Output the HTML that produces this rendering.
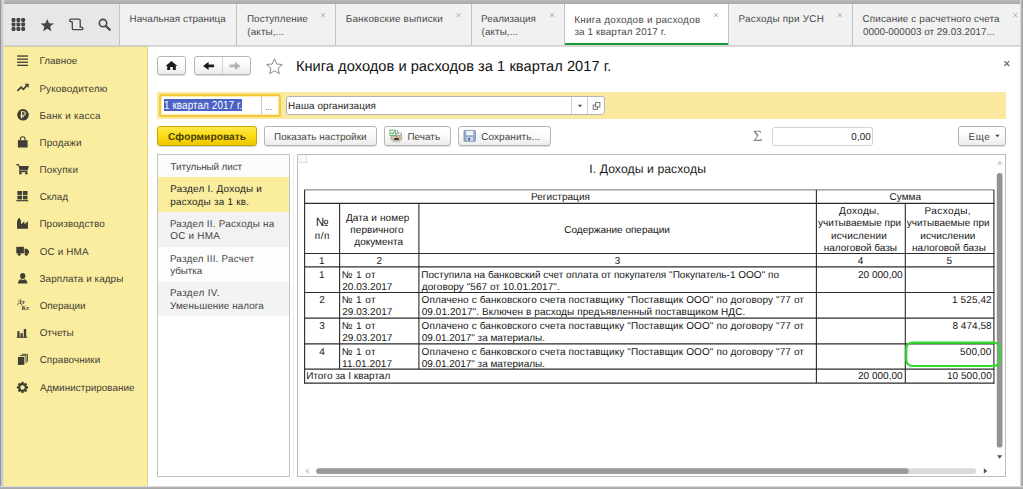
<!DOCTYPE html>
<html lang="ru"><head><meta charset="utf-8"><title>Книга доходов и расходов за 1 квартал 2017 г.</title>
<style>
*{box-sizing:border-box;margin:0;padding:0}
html,body{width:1023px;height:489px;overflow:hidden}
body{position:relative;background:#fff;font-family:"Liberation Sans",Arial,sans-serif;font-size:10px;color:#333;text-rendering:geometricPrecision}
.a{position:absolute}
.t{position:absolute;white-space:nowrap;line-height:14px;height:14px}
.btn{position:absolute;background:linear-gradient(180deg,#ffffff 0,#fbfbfb 45%,#ececec 100%);border:1px solid #b5b5b5;border-radius:3px;box-shadow:0 1px 0 rgba(0,0,0,.13)}
.ybtn{position:absolute;background:linear-gradient(180deg,#ffe94a 0,#fbdc12 50%,#efc600 100%);border:1px solid #c7a503;border-radius:3px;box-shadow:0 1px 0 rgba(0,0,0,.16)}
.x{position:absolute;width:5px;height:5px}
svg{position:absolute;overflow:visible}
</style></head><body>
<div class="a" style="left:4px;top:4px;width:1017px;height:42px;background:#f1f1f1"></div>
<div class="a" style="left:4px;top:4px;width:115px;height:41px;background:#e7e7e7"></div>
<div class="a" style="left:4px;top:45px;width:1017px;height:1px;background:#d3d3d3"></div>
<div class="a" style="left:148px;top:46px;width:873px;height:1px;background:#d9d9d9"></div>
<div class="a" style="left:119px;top:4px;width:1px;height:41px;background:#c2c2c2"></div>
<div class="a" style="left:236px;top:4px;width:1px;height:41px;background:#c2c2c2"></div>
<div class="a" style="left:335px;top:4px;width:1px;height:41px;background:#c2c2c2"></div>
<div class="a" style="left:471px;top:4px;width:1px;height:41px;background:#c2c2c2"></div>
<div class="a" style="left:852px;top:4px;width:1px;height:41px;background:#c2c2c2"></div>
<div class="a" style="left:564px;top:4px;width:165px;height:41px;background:#fff;border-left:1px solid #c2c2c2;border-right:1px solid #c2c2c2"></div>
<div class="a" style="left:565px;top:43px;width:163px;height:2px;background:#1a9a3a"></div>
<svg style="left:0;top:0" width="1023" height="489"><path d="M321.25 13.15L325.15 17.05M325.15 13.15L321.25 17.05" stroke="#a6a6a6" stroke-width="0.9" fill="none"/></svg>
<svg style="left:0;top:0" width="1023" height="489"><path d="M456.65000000000003 13.15L460.55 17.05M460.55 13.15L456.65000000000003 17.05" stroke="#a6a6a6" stroke-width="0.9" fill="none"/></svg>
<svg style="left:0;top:0" width="1023" height="489"><path d="M550.15 13.15L554.0500000000001 17.05M554.0500000000001 13.15L550.15 17.05" stroke="#a6a6a6" stroke-width="0.9" fill="none"/></svg>
<svg style="left:0;top:0" width="1023" height="489"><path d="M714.05 13.15L717.95 17.05M717.95 13.15L714.05 17.05" stroke="#a6a6a6" stroke-width="0.9" fill="none"/></svg>
<svg style="left:0;top:0" width="1023" height="489"><path d="M837.8499999999999 13.15L841.75 17.05M841.75 13.15L837.8499999999999 17.05" stroke="#a6a6a6" stroke-width="0.9" fill="none"/></svg>
<svg style="left:0;top:0" width="1023" height="489"><path d="M1013.4499999999999 13.15L1017.35 17.05M1017.35 13.15L1013.4499999999999 17.05" stroke="#a6a6a6" stroke-width="0.9" fill="none"/></svg>
<svg style="left:0;top:0" width="125" height="46" viewBox="0 0 125 46">
<g fill="#454545"><rect x="11.6" y="18.0" width="3.9" height="3.9" rx="1.1"/><rect x="11.6" y="22.5" width="3.9" height="3.9" rx="1.1"/><rect x="11.6" y="27.0" width="3.9" height="3.9" rx="1.1"/><rect x="16.4" y="18.0" width="3.9" height="3.9" rx="1.1"/><rect x="16.4" y="22.5" width="3.9" height="3.9" rx="1.1"/><rect x="16.4" y="27.0" width="3.9" height="3.9" rx="1.1"/><rect x="21.2" y="18.0" width="3.9" height="3.9" rx="1.1"/><rect x="21.2" y="22.5" width="3.9" height="3.9" rx="1.1"/><rect x="21.2" y="27.0" width="3.9" height="3.9" rx="1.1"/></g>
<path d="M47.25 18.9l1.75 4.3 4.9.35-3.75 3.05 1.2 4.6-4.1-2.55-4.1 2.55 1.2-4.6-3.75-3.05 4.9-.35z" fill="#454545"/>
<path d="M72.3 21.7H70.9a1.25 1.25 0 0 1 0-2.5H78.9a1.3 1.3 0 0 1 1.3 1.3V27.2H81.6a1.25 1.25 0 0 1 0 2.5H73.6a1.3 1.3 0 0 1-1.3-1.3V21.7" fill="none" stroke="#454545" stroke-width="1.3"/>
<circle cx="103" cy="23.1" r="3.7" fill="none" stroke="#454545" stroke-width="1.6"/>
<path d="M105.8 26l4 3.8" stroke="#454545" stroke-width="2.1" stroke-linecap="round"/>
</svg>
<div class="a" style="left:4px;top:46px;width:144px;height:441px;background:#fbeda0"></div>
<div class="a" style="left:4px;top:46px;width:144px;height:1px;background:#d4cb9f"></div>
<div class="a" style="left:147px;top:46px;width:1px;height:441px;background:#e9d97c"></div>
<svg style="left:0;top:0" width="150" height="489" viewBox="0 0 150 489">
<g fill="#3f3d36">
<!-- 1 menu -->
<rect x="17.1" y="55.4" width="10.9" height="1.3"/><rect x="17.1" y="58.5" width="10.9" height="1.3"/><rect x="17.1" y="61.6" width="10.9" height="1.3"/><rect x="17.1" y="64.7" width="10.9" height="1.3"/>
<!-- 3 ruble -->
<circle cx="23" cy="114.8" r="5.8"/>
<!-- 4 bag -->
<path d="M17.9 140.2h9.7v7.3h-9.7z"/>
<!-- 5 cart -->
<path d="M18.6 165.9h10.3l-1.3 4.6h-8z"/><circle cx="20.4" cy="173.3" r="1.2"/><circle cx="26.4" cy="173.3" r="1.2"/>
<!-- 6 sklad -->
<rect x="17.4" y="191" width="4.6" height="3.9"/><rect x="22.9" y="191" width="4.6" height="3.9"/><rect x="17.4" y="195.7" width="4.6" height="3.7"/><rect x="22.9" y="195.7" width="4.6" height="3.7"/><rect x="16.4" y="200.1" width="11.8" height="1.2"/>
<!-- 7 factory -->
<path d="M17 228.8v-7.2l1.4-3.3h1.6l1 3.3v2.6l3.4-2.9v2.9l3.5-2.9v7.5z"/>
<!-- 8 truck -->
<path d="M16.3 246.8h7.6v6.6h-7.6z"/><path d="M24.5 248.7h2.6l1.9 2.4v2.3h-4.5z"/><circle cx="19.2" cy="254.2" r="1.5"/><circle cx="26.3" cy="254.2" r="1.5"/>
<!-- 9 person -->
<ellipse cx="22.7" cy="276" rx="2.6" ry="3"/><path d="M17.9 283.4c0-2.6 1.7-4 3.3-4.2l1.5 1 1.5-1c1.6.2 3.3 1.6 3.3 4.2z"/>
<!-- 11 chart -->
<rect x="17.3" y="331.2" width="2.3" height="6"/><rect x="20.5" y="333.2" width="2.3" height="4"/><rect x="23.8" y="329" width="2.4" height="8.2"/><rect x="16.7" y="336.8" width="10.8" height="1"/>
<!-- 12 docs -->
<rect x="17.9" y="357" width="6.4" height="7.9"/>
</g>
<!-- 2 trend -->
<path d="M17.4 90.9l3.7-3.7 2.2 2.2 4-4.2" fill="none" stroke="#3f3d36" stroke-width="1.7" stroke-linejoin="miter"/><path d="M24.6 83.8h4.1v4.1z" fill="#3f3d36"/>
<!-- ruble glyph -->
<path d="M21.5 118.3v-6.6h2.1a1.75 1.75 0 0 1 0 3.5h-3.1M20.5 116.7h3.4" fill="none" stroke="#fbeda0" stroke-width="1.15"/>
<!-- bag handle -->
<path d="M20.3 141.5v-2.3a2.4 2.4 0 0 1 4.8 0v2.3" fill="none" stroke="#3f3d36" stroke-width="1.1"/>
<!-- cart handle -->
<path d="M16.3 164.6h2l.9 2M19.3 170.3l.5 1.3h7.6" fill="none" stroke="#3f3d36" stroke-width="1.1"/>
<!-- docs back sheets -->
<path d="M19.9 355.6h6.1v7.6M21.7 354.3h5.7v7.4" fill="none" stroke="#3f3d36" stroke-width="0.9"/>
<!-- gear -->
<g transform="translate(22.5 387.4)"><circle r="3.3" fill="none" stroke="#3f3d36" stroke-width="2.1"/><g fill="#3f3d36"><rect x="-1.1" y="-5.6" width="2.2" height="2.4" transform="rotate(0)"/><rect x="-1.1" y="-5.6" width="2.2" height="2.4" transform="rotate(45)"/><rect x="-1.1" y="-5.6" width="2.2" height="2.4" transform="rotate(90)"/><rect x="-1.1" y="-5.6" width="2.2" height="2.4" transform="rotate(135)"/><rect x="-1.1" y="-5.6" width="2.2" height="2.4" transform="rotate(180)"/><rect x="-1.1" y="-5.6" width="2.2" height="2.4" transform="rotate(225)"/><rect x="-1.1" y="-5.6" width="2.2" height="2.4" transform="rotate(270)"/><rect x="-1.1" y="-5.6" width="2.2" height="2.4" transform="rotate(315)"/></g></g>
</svg>
<div class="t" style="left:17.2px;top:298.6px;font-family:'Liberation Serif',serif;font-weight:bold;font-size:6.6px;line-height:7px;height:7px;color:#3f3d36">Дт</div>
<div class="t" style="left:21.4px;top:304.8px;font-family:'Liberation Serif',serif;font-weight:bold;font-size:6.6px;line-height:7px;height:7px;color:#3f3d36">Кт</div>
<div class="btn" style="left:157px;top:56px;width:29px;height:19px"></div>
<div class="btn" style="left:194px;top:56px;width:57px;height:19px"></div>
<div class="a" style="left:222px;top:57px;width:1px;height:17px;background:#d4d4d4"></div>
<svg style="left:0;top:0" width="300" height="80" viewBox="0 0 300 80">
<path d="M171.5 60.9l5.9 5.2h-1.6v3.9h-3v-3h-2.6v3h-3v-3.9h-1.6z" fill="#1c1c1c"/>
<path d="M208.6 61.7l-5.5 4.2 5.5 4.2v-2.9h5.5v-2.6h-5.5z" fill="#1c1c1c"/>
<path d="M235 61.7l5.5 4.2-5.5 4.2v-2.9h-5.5v-2.6h5.5z" fill="#b3b3b3"/>
<path d="M274.5 58.9l2.2 5.1 5.6.5-4.25 3.7 1.3 5.5-4.85-2.95-4.85 2.95 1.3-5.5-4.25-3.7 5.6-.5z" fill="#fff" stroke="#7a7a7a" stroke-width="0.9" stroke-linejoin="miter"/>
</svg>
<svg style="left:0;top:0" width="1023" height="489"><path d="M1004.4 61.2L1009.1999999999999 66.0M1009.1999999999999 61.2L1004.4 66.0" stroke="#666" stroke-width="1.15" fill="none"/></svg>
<div class="a" style="left:157px;top:92px;width:849px;height:27px;background:#fbe9a0"></div>
<div class="a" style="left:159px;top:93.5px;width:121.5px;height:23.5px;background:#fff;border:2px solid #f5c938;border-radius:2.5px;box-shadow:inset 0 0 1px 1px rgba(251,228,150,.75)"></div>
<div class="a" style="left:164px;top:98.6px;width:78px;height:12.6px;background:#4962c4"></div>
<div class="a" style="left:260.5px;top:96px;width:1px;height:19px;background:#c9c9c9"></div>
<div class="a" style="left:266.2px;top:109px;width:1.1px;height:1.1px;background:#777;box-shadow:2.3px 0 0 #777,4.6px 0 0 #777"></div>
<div class="a" style="left:285.5px;top:96px;width:319px;height:19px;background:#fff;border:1px solid #b3b3b3;border-radius:3px"></div>
<div class="a" style="left:571px;top:97px;width:1px;height:17px;background:#cfcfcf"></div>
<div class="a" style="left:587px;top:97px;width:1px;height:17px;background:#cfcfcf"></div>
<svg style="left:0;top:0" width="620" height="120" viewBox="0 0 620 120">
<path d="M577.9 104.8h4.2l-2.1 2.4z" fill="#444"/>
<rect x="593.2" y="105" width="4.3" height="4.3" fill="#fff" stroke="#666" stroke-width="0.9"/>
<rect x="595.6" y="102.6" width="4.3" height="4.3" fill="#fff" stroke="#666" stroke-width="0.9"/>
</svg>
<div class="ybtn" style="left:157px;top:126px;width:100px;height:20px"></div>
<div class="btn" style="left:264px;top:126px;width:113px;height:20px"></div>
<div class="btn" style="left:384px;top:126px;width:67px;height:20px"></div>
<div class="btn" style="left:458px;top:126px;width:93px;height:20px"></div>
<div class="a" style="left:772px;top:127.2px;width:101px;height:18.4px;background:#fff;border:1px solid #d2d2d2;border-radius:2.5px"></div>
<div class="btn" style="left:958px;top:126px;width:48px;height:20px"></div>
<div class="t" style="left:752.6px;top:127.5px;font-family:'Liberation Serif',serif;font-size:15.5px;line-height:18px;height:18px;color:#858585;transform:scale(1.03,1);transform-origin:0 50%">Σ</div>
<svg style="left:0;top:0" width="1023" height="150" viewBox="0 0 1023 150">
<!-- print icon -->
<path d="M397.3 130.3l1.3 3.8" stroke="#7ea6d2" stroke-width="1.1" fill="none"/>
<rect x="396" y="133.1" width="5.4" height="3" fill="#ececec" stroke="#8f8f8f" stroke-width="0.7"/>
<rect x="390.9" y="135.6" width="10.8" height="4.4" rx="1" fill="#d6c6ae" stroke="#a08f79" stroke-width="0.6"/>
<rect x="394.2" y="138" width="4.6" height="2" fill="#333"/>
<circle cx="396.5" cy="136.7" r="0.65" fill="#e25555"/><circle cx="399.2" cy="137" r="0.6" fill="#37a83e"/>
<rect x="392.7" y="140.3" width="7.4" height="1.5" rx="0.75" fill="#d4d4d4" stroke="#9a9a9a" stroke-width="0.5"/>
<rect x="390" y="130.2" width="5.6" height="5.4" fill="#fff" stroke="#5aae5a" stroke-width="0.95"/>
<path d="M391.2 132.7l1.3 1.5 2.1-2.7" fill="none" stroke="#2a7a2a" stroke-width="1"/>
<!-- save icon -->
<rect x="464" y="130.4" width="11.4" height="11" rx="1" fill="#93aecd" stroke="#7593b6" stroke-width="0.9"/>
<rect x="466.2" y="130.9" width="7" height="4.3" fill="#f0f4f9"/>
<rect x="466.6" y="137.2" width="6.4" height="4" fill="#d3dae3"/>
<rect x="468.2" y="138" width="1.8" height="2.6" fill="#4b5d76"/>
<!-- more caret -->
<path d="M995.2 134.8h4.4l-2.2 2.5z" fill="#444"/>
</svg>
<div class="a" style="left:157px;top:154px;width:133px;height:323px;background:#fff;border:1px solid #c3c3c3"></div>
<div class="a" style="left:158px;top:155px;width:131px;height:22.4px;background:#fbfbfb"></div>
<div class="a" style="left:158px;top:177.4px;width:131px;height:34.8px;background:#fbed9e"></div>
<div class="a" style="left:158px;top:212.2px;width:131px;height:34.7px;background:#f2f2f2"></div>
<div class="a" style="left:158px;top:246.9px;width:131px;height:34.9px;background:#fdfdfd"></div>
<div class="a" style="left:158px;top:281.8px;width:131px;height:34.4px;background:#f3f3f3"></div>
<div class="a" style="left:293px;top:155px;width:0;height:321px;border-left:1px dotted #d9d9d9"></div>
<div class="a" style="left:297px;top:154px;width:709px;height:323px;background:#fff;border:1px solid #bcbcbc"></div>
<div class="a" style="left:298px;top:155px;width:8.5px;height:7.5px;background:#f8f8f8;border-right:1px solid #e1e1e1;border-bottom:1px solid #e1e1e1"></div>
<svg style="left:0;top:0" width="1023" height="489" viewBox="0 0 1023 489">
<path d="M304.1 189.9H994.4" stroke="#8d8d8d" stroke-width="1.2"/>
<path d="M304.1 203.4H994.4" stroke="#2b2b2b" stroke-width="1.1"/>
<path d="M304.1 253.5H994.4" stroke="#2b2b2b" stroke-width="1.1"/>
<path d="M304.1 266.9H994.4" stroke="#2b2b2b" stroke-width="1.1"/>
<path d="M304.1 292.5H994.4" stroke="#2b2b2b" stroke-width="1.1"/>
<path d="M304.1 318.1H994.4" stroke="#2b2b2b" stroke-width="1.1"/>
<path d="M304.1 343.9H994.4" stroke="#2b2b2b" stroke-width="1.1"/>
<path d="M304.1 369.1H994.4" stroke="#2b2b2b" stroke-width="1.1"/>
<path d="M304.1 383.1H994.4" stroke="#2b2b2b" stroke-width="1.1"/>
<path d="M304.6 189.9V383.6" stroke="#2b2b2b" stroke-width="1.1"/>
<path d="M993.9 189.9V383.6" stroke="#2b2b2b" stroke-width="1.1"/>
<path d="M816.4 189.9V383.1" stroke="#2b2b2b" stroke-width="1.1"/>
<path d="M905.3 203.4V383.1" stroke="#2b2b2b" stroke-width="1.1"/>
<path d="M339.6 203.4V369.1" stroke="#2b2b2b" stroke-width="1.1"/>
<path d="M418.9 203.4V369.1" stroke="#2b2b2b" stroke-width="1.1"/>
<path d="M996.7 164.6l3-4 3 4z" fill="#d2d2d2"/>
<rect x="996.8" y="173" width="5.7" height="274.5" rx="2.85" fill="#939393"/>
<path d="M996.9 455.3h5.4l-2.7 3.4z" fill="#555"/>
<path d="M308.6 468v6l-4-3z" fill="#d2d2d2"/>
<rect x="316.2" y="468.2" width="660" height="5.8" rx="2.9" fill="#dadada"/>
<rect x="316.2" y="468.2" width="592.5" height="5.8" rx="2.9" fill="#9a9a9a"/>
<path d="M983.8 468.3v5.4l3.5-2.7z" fill="#555"/>
<rect x="906.3" y="342.6" width="93.6" height="23.4" rx="6" fill="none" stroke="#2bdc2b" stroke-width="2.1"/>
</svg>
<div class="a" style="left:0;top:0;width:1023px;height:4px;background:linear-gradient(180deg,#b9b9b9,#a8a8a8)"></div>
<div class="a" style="left:0;top:0;width:4px;height:489px;background:linear-gradient(90deg,#959595 0,#959595 1px,#c4c4c4 1px,#c9c9c9 2px,#d4d4d4 3px,#e6e6e6 4px)"></div>
<div class="a" style="left:1020px;top:0;width:3px;height:489px;background:linear-gradient(90deg,#d9d9d9 0,#d9d9d9 1px,#b4b4b4 1px,#a5a5a5 3px)"></div>
<div class="a" style="left:0;top:486px;width:1023px;height:3px;background:linear-gradient(180deg,#dcdcdc 0,#dcdcdc 1px,#b6b6b6 1px,#a3a3a3 3px)"></div>
<div class="t" style="left:129.60px;top:13.00px;font-size:9.9px;color:#4a4a4a;letter-spacing:0.033px">Начальная страница</div>
<div class="t" style="left:246.90px;top:13.00px;font-size:9.9px;color:#4a4a4a;letter-spacing:0.077px">Поступление</div>
<div class="t" style="left:247.32px;top:26.00px;font-size:9.9px;color:#4a4a4a;letter-spacing:0.12px">(акты,...</div>
<div class="t" style="left:345.70px;top:13.00px;font-size:9.9px;color:#4a4a4a;letter-spacing:0.216px">Банковские выписки</div>
<div class="t" style="left:481.09px;top:13.00px;font-size:9.9px;color:#4a4a4a;letter-spacing:-0.008px">Реализация</div>
<div class="t" style="left:481.52px;top:26.00px;font-size:9.9px;color:#4a4a4a;letter-spacing:0.096px">(акты,...</div>
<div class="t" style="left:574.29px;top:14.00px;font-size:9.9px;color:#4a4a4a;letter-spacing:0.272px">Книга доходов и расходов</div>
<div class="t" style="left:574.47px;top:26.00px;font-size:9.9px;color:#4a4a4a;letter-spacing:0.111px">за 1 квартал 2017 г.</div>
<div class="t" style="left:738.59px;top:13.00px;font-size:9.9px;color:#4a4a4a;letter-spacing:0.226px">Расходы при УСН</div>
<div class="t" style="left:862.54px;top:13.00px;font-size:9.9px;color:#4a4a4a;letter-spacing:0.134px">Списание с расчетного счета</div>
<div class="t" style="left:862.94px;top:26.00px;font-size:9.9px;color:#4a4a4a;letter-spacing:0.026px">0000-000003 от 29.03.2017...</div>
<div class="t" style="left:39.39px;top:55.00px;font-size:9.9px;color:#3d3b33;letter-spacing:0.036px">Главное</div>
<div class="t" style="left:39.39px;top:83.00px;font-size:9.9px;color:#3d3b33;letter-spacing:0.162px">Руководителю</div>
<div class="t" style="left:39.40px;top:110.00px;font-size:9.9px;color:#3d3b33;letter-spacing:0.269px">Банк и касса</div>
<div class="t" style="left:39.40px;top:137.00px;font-size:9.9px;color:#3d3b33;letter-spacing:0.165px">Продажи</div>
<div class="t" style="left:39.40px;top:164.00px;font-size:9.9px;color:#3d3b33;letter-spacing:0.232px">Покупки</div>
<div class="t" style="left:39.64px;top:191.00px;font-size:9.9px;color:#3d3b33;letter-spacing:-0.064px">Склад</div>
<div class="t" style="left:39.40px;top:218.00px;font-size:9.9px;color:#3d3b33;letter-spacing:0.099px">Производство</div>
<div class="t" style="left:39.69px;top:246.00px;font-size:9.9px;color:#3d3b33;letter-spacing:0.151px">ОС и НМА</div>
<div class="t" style="left:39.58px;top:273.00px;font-size:9.9px;color:#3d3b33;letter-spacing:0.07px">Зарплата и кадры</div>
<div class="t" style="left:39.69px;top:300.00px;font-size:9.9px;color:#3d3b33;letter-spacing:-0.046px">Операции</div>
<div class="t" style="left:39.69px;top:327.00px;font-size:9.9px;color:#3d3b33;letter-spacing:-0.042px">Отчеты</div>
<div class="t" style="left:39.64px;top:354.00px;font-size:9.9px;color:#3d3b33;letter-spacing:0.078px">Справочники</div>
<div class="t" style="left:39.89px;top:382.00px;font-size:9.9px;color:#3d3b33;letter-spacing:0.029px">Администрирование</div>
<div class="t" style="left:295.91px;top:60.00px;font-size:14.6px;color:#111;letter-spacing:0.054px">Книга доходов и расходов за 1 квартал 2017 г.</div>
<div class="t" style="left:163.95px;top:100.00px;font-size:9.9px;color:#fff;letter-spacing:0.102px;transform:scaleY(1.18);transform-origin:0 9px">1 квартал 2017 г.</div>
<div class="t" style="left:288.10px;top:100.00px;font-size:9.9px;color:#222;letter-spacing:0.11px">Наша организация</div>
<div class="t" style="left:168.08px;top:131.00px;font-size:10.1px;color:#4a4109;font-weight:bold;letter-spacing:0.098px">Сформировать</div>
<div class="t" style="left:274.00px;top:131.00px;font-size:9.9px;color:#444;letter-spacing:0.067px">Показать настройки</div>
<div class="t" style="left:407.40px;top:131.00px;font-size:9.9px;color:#444;letter-spacing:0.058px">Печать</div>
<div class="t" style="left:481.24px;top:131.00px;font-size:9.9px;color:#444;letter-spacing:0.138px">Сохранить...</div>
<div class="t" style="left:851.34px;top:131.00px;font-size:9.9px;color:#222;letter-spacing:0.061px">0,00</div>
<div class="t" style="left:968.59px;top:131.00px;font-size:9.9px;color:#444;letter-spacing:0.5px">Еще</div>
<div class="t" style="left:170.58px;top:161.00px;font-size:9.9px;color:#444;letter-spacing:-0.116px">Титульный лист</div>
<div class="t" style="left:170.19px;top:183.00px;font-size:9.9px;color:#222;letter-spacing:0.275px">Раздел I. Доходы и</div>
<div class="t" style="left:170.30px;top:196.00px;font-size:9.9px;color:#222;letter-spacing:0.249px">расходы за 1 кв.</div>
<div class="t" style="left:169.89px;top:218.00px;font-size:9.9px;color:#444;letter-spacing:0.229px">Раздел II. Расходы на</div>
<div class="t" style="left:170.19px;top:230.00px;font-size:9.9px;color:#444;letter-spacing:0.27px">ОС и НМА</div>
<div class="t" style="left:169.89px;top:253.00px;font-size:9.9px;color:#444;letter-spacing:0.213px">Раздел III. Расчет</div>
<div class="t" style="left:170.30px;top:265.00px;font-size:9.9px;color:#444;letter-spacing:-0.09px">убытка</div>
<div class="t" style="left:169.89px;top:287.00px;font-size:9.9px;color:#444;letter-spacing:0.341px">Раздел IV.</div>
<div class="t" style="left:170.04px;top:300.00px;font-size:9.9px;color:#444;letter-spacing:0.079px">Уменьшение налога</div>
<div class="t" style="left:589.25px;top:162.00px;font-size:12.2px;color:#222;letter-spacing:0.086px">I. Доходы и расходы</div>
<div class="t" style="left:530.96px;top:191.00px;font-size:10px;color:#151515;letter-spacing:0.055px">Регистрация</div>
<div class="t" style="left:889.44px;top:191.00px;font-size:10px;color:#151515;letter-spacing:0.043px">Сумма</div>
<div class="t" style="left:315.74px;top:215.00px;font-size:12px;color:#151515">№</div>
<div class="t" style="left:314.86px;top:230.00px;font-size:10px;color:#151515;letter-spacing:0.465px">п/п</div>
<div class="t" style="left:345.96px;top:212.00px;font-size:10px;color:#151515;letter-spacing:0.1px">Дата и номер</div>
<div class="t" style="left:350.36px;top:224.00px;font-size:10px;color:#151515;letter-spacing:0.061px">первичного</div>
<div class="t" style="left:354.34px;top:236.00px;font-size:10px;color:#151515;letter-spacing:-0.008px">документа</div>
<div class="t" style="left:564.33px;top:224.00px;font-size:10px;color:#151515;letter-spacing:-0.015px">Содержание операции</div>
<div class="t" style="left:839.06px;top:205.00px;font-size:10px;color:#151515;letter-spacing:0.321px">Доходы,</div>
<div class="t" style="left:818.11px;top:217.00px;font-size:10px;color:#151515;letter-spacing:0.01px">учитываемые при</div>
<div class="t" style="left:831.09px;top:230.00px;font-size:10px;color:#151515;letter-spacing:0.149px">исчислении</div>
<div class="t" style="left:823.69px;top:242.00px;font-size:10px;color:#151515;letter-spacing:-0.007px">налоговой базы</div>
<div class="t" style="left:924.46px;top:205.00px;font-size:10px;color:#151515;letter-spacing:0.462px">Расходы,</div>
<div class="t" style="left:906.71px;top:217.00px;font-size:10px;color:#151515">учитываемые при</div>
<div class="t" style="left:920.29px;top:230.00px;font-size:10px;color:#151515;letter-spacing:0.082px">исчислении</div>
<div class="t" style="left:912.09px;top:242.00px;font-size:10px;color:#151515;letter-spacing:0.024px">налоговой базы</div>
<div class="t" style="left:319.10px;top:255.00px;font-size:10px;color:#151515">1</div>
<div class="t" style="left:376.39px;top:255.00px;font-size:10px;color:#151515">2</div>
<div class="t" style="left:614.75px;top:255.00px;font-size:10px;color:#151515">3</div>
<div class="t" style="left:857.81px;top:255.00px;font-size:10px;color:#151515">4</div>
<div class="t" style="left:946.56px;top:255.00px;font-size:10px;color:#151515">5</div>
<div class="t" style="left:319.10px;top:269.00px;font-size:10px;color:#151515">1</div>
<div class="t" style="left:341.80px;top:269.00px;font-size:10px;color:#151515;letter-spacing:0.396px">№ 1 от</div>
<div class="t" style="left:342.30px;top:281.00px;font-size:10px;color:#151515">20.03.2017</div>
<div class="t" style="left:421.29px;top:269.00px;font-size:10px;color:#151515;letter-spacing:0.017px">Поступила на банковский счет оплата от покупателя "Покупатель-1 ООО" по</div>
<div class="t" style="left:421.84px;top:281.00px;font-size:10px;color:#151515;letter-spacing:0.051px">договору "567 от 10.01.2017".</div>
<div class="t" style="left:319.24px;top:294.00px;font-size:10px;color:#151515">2</div>
<div class="t" style="left:341.80px;top:294.00px;font-size:10px;color:#151515;letter-spacing:0.396px">№ 1 от</div>
<div class="t" style="left:342.30px;top:306.00px;font-size:10px;color:#151515">29.03.2017</div>
<div class="t" style="left:421.59px;top:294.00px;font-size:10px;color:#151515;letter-spacing:0.118px">Оплачено с банковского счета поставщику "Поставщик ООО" по договору "77 от</div>
<div class="t" style="left:421.64px;top:306.00px;font-size:10px;color:#151515;letter-spacing:0.09px">09.01.2017". Включен в расходы предъявленный поставщиком НДС.</div>
<div class="t" style="left:319.20px;top:320.00px;font-size:10px;color:#151515">3</div>
<div class="t" style="left:341.80px;top:320.00px;font-size:10px;color:#151515;letter-spacing:0.396px">№ 1 от</div>
<div class="t" style="left:342.30px;top:332.00px;font-size:10px;color:#151515">29.03.2017</div>
<div class="t" style="left:421.59px;top:320.00px;font-size:10px;color:#151515;letter-spacing:0.118px">Оплачено с банковского счета поставщику "Поставщик ООО" по договору "77 от</div>
<div class="t" style="left:421.64px;top:332.00px;font-size:10px;color:#151515;letter-spacing:-0.032px">09.01.2017" за материалы.</div>
<div class="t" style="left:319.31px;top:346.00px;font-size:10px;color:#151515">4</div>
<div class="t" style="left:341.80px;top:346.00px;font-size:10px;color:#151515;letter-spacing:0.396px">№ 1 от</div>
<div class="t" style="left:342.02px;top:358.00px;font-size:10px;color:#151515;letter-spacing:0.075px">11.01.2017</div>
<div class="t" style="left:421.59px;top:346.00px;font-size:10px;color:#151515;letter-spacing:0.118px">Оплачено с банковского счета поставщику "Поставщик ООО" по договору "77 от</div>
<div class="t" style="left:421.64px;top:358.00px;font-size:10px;color:#151515;letter-spacing:-0.032px">09.01.2017" за материалы.</div>
<div class="t" style="left:857.90px;top:269.00px;font-size:10px;color:#151515;letter-spacing:0.032px">20 000,00</div>
<div class="t" style="left:952.12px;top:294.00px;font-size:10px;color:#151515;letter-spacing:0.082px">1 525,42</div>
<div class="t" style="left:952.40px;top:320.00px;font-size:10px;color:#151515;letter-spacing:0.042px">8 474,58</div>
<div class="t" style="left:960.00px;top:346.00px;font-size:10px;color:#151515;letter-spacing:0.142px">500,00</div>
<div class="t" style="left:306.16px;top:370.00px;font-size:10px;color:#151515;letter-spacing:0.019px">Итого за I квартал</div>
<div class="t" style="left:857.90px;top:370.00px;font-size:10px;color:#151515;letter-spacing:0.032px">20 000,00</div>
<div class="t" style="left:946.92px;top:370.00px;font-size:10px;color:#151515;letter-spacing:0.045px">10 500,00</div>
</body></html>
